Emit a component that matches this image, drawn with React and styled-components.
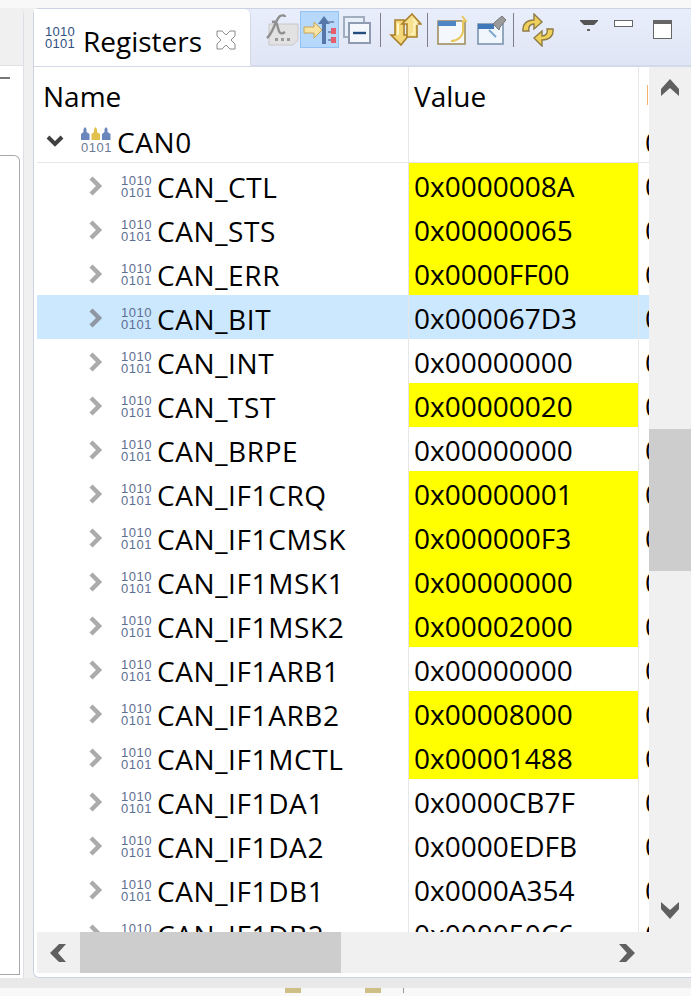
import React from "react";
import styled, { createGlobalStyle } from "styled-components";

const GlobalStyle = createGlobalStyle`
  html, body {
    margin: 0;
    padding: 0;
    background: #f0f0f0;
    overflow: hidden;
  }
  * { box-sizing: border-box; }
`;

const Page = styled.div`
  width: 691px;
  height: 996px;
  display: flex;
  flex-direction: column;
  overflow: hidden;
  font-family: "Open Sans", "Noto Sans", sans-serif;
  color: #000;
`;

const TopStrip = styled.div`
  height: 8px;
  flex: none;
  background: #f8f8f8;
`;

const Main = styled.div`
  height: 970px;
  flex: none;
  display: flex;
  background: #f0f0f0;
`;

const LeftPanel = styled.div`
  width: 24px;
  flex: none;
  display: flex;
  flex-direction: column;
  padding-bottom: 3px;
  background: #fff;
  border-right: 1px solid #dcdfe6;
  border-top-right-radius: 6px;
  overflow: hidden;
`;

const LeftHeader = styled.div`
  height: 58px;
  flex: none;
  background: #f0f0f0;
  border-bottom: 1px solid #e0e0e0;
`;

const LeftGap = styled.div`
  height: 89px;
  flex: none;
  padding-top: 11px;
`;

const LeftDash = styled.div`
  width: 10px;
  height: 2px;
  background: #777;
`;

const LeftBox = styled.div`
  flex: 1;
  width: 20px;
  background: #fff;
  border: 1px solid #a8a8a8;
  border-left: none;
  border-top-right-radius: 6px;
`;

const View = styled.div`
  width: 658px;
  margin-left: 9px;
  flex: none;
  display: flex;
  flex-direction: column;
  background: #fff;
  border: 1px solid #ccd2e4;
  border-right: none;
  border-top-left-radius: 6px;
  border-bottom-left-radius: 6px;
`;

const ViewHeader = styled.div`
  height: 58px;
  flex: none;
  display: flex;
  background: linear-gradient(#e9eefc, #dfe5f4);
  border-bottom: 2px solid #d4d9e8;
`;

const Tab = styled.div`
  width: 217px;
  height: 57px;
  flex: none;
  display: flex;
  align-items: center;
  padding: 0 14px 0 11px;
  background: #fff;
  border-right: 1px solid #d4d9e8;
  border-bottom: 1px solid #fff;
  border-top-right-radius: 6px;
`;

const TabLabel = styled.span`
  margin: 7px 0 0 8px;
  font-size: 28px;
  line-height: 36px;
  flex: 1;
`;

const TabClose = styled.span`
  display: flex;
  margin-top: 6px;
`;

const Toolbar = styled.div`
  flex: 1;
  display: flex;
  align-items: center;
  padding: 0 0 15px 14px;
`;

const ToolButton = styled.div`
  width: ${(p) => p.$w || 40}px;
  height: 37px;
  flex: none;
  display: flex;
  align-items: center;
  justify-content: center;
  background: ${(p) => (p.$on ? "#b6d9fb" : "transparent")};
  border: ${(p) => (p.$on ? "1px solid #92c3f2" : "none")};
`;

const Sep = styled.div`
  width: 1px;
  height: 34px;
  flex: none;
  margin: 0 4px 0 ${(p) => p.$l}px;
  background: #7d8088;
`;

const WindowButtons = styled.div`
  margin-left: 22px;
  display: flex;
  align-items: flex-start;
  gap: 16px;
  height: 37px;
  padding-top: 9px;
`;

const Body = styled.div`
  flex: 1;
  min-height: 0;
  display: grid;
  grid-template-columns: 612px 42px;
  grid-template-rows: 865px 41px;
  padding-left: 3px;
`;

const Table = styled.div`
  overflow: hidden;
  display: flex;
  flex-direction: column;
`;

const columns = "372px 230px 10px";

const HeaderRow = styled.div`
  height: 52px;
  flex: none;
  display: grid;
  grid-template-columns: ${columns};
`;

const HeaderCell = styled.div`
  font-size: 28px;
  line-height: 58px;
  padding-left: ${(p) => p.$pl || 5}px;
  border-right: 1px solid #e6e6e6;
  overflow: hidden;
  white-space: nowrap;
`;

const HeaderEdge = styled.div`
  margin: 18px 0 0 8px;
  width: 1px;
  height: 20px;
  background: #f5b56e;
`;

const Row = styled.div`
  height: 44px;
  flex: none;
  display: grid;
  grid-template-columns: ${columns};
  background: ${(p) => (p.$selected ? "#cce8ff" : "#fff")};
`;

const NameCell = styled.div`
  display: flex;
  align-items: center;
  padding-left: ${(p) => (p.$root ? 8 : 49)}px;
  font-size: 28px;
  letter-spacing: 0.6px;
  border-right: 1px solid #e6e6e6;
  border-bottom: 1px solid #e6e6e6;
  white-space: nowrap;
`;

const Twist = styled.svg`
  width: 20px;
  height: 20px;
  flex: none;
  margin-right: ${(p) => p.$mr}px;
`;

const RegName = styled.span`
  margin: ${(p) => (p.$root ? 2 : 2)}px 0 0 6px;
  line-height: 40px;
`;

const ValueCell = styled.div`
  padding: 2px 0 0 5px;
  font-size: 28px;
  line-height: 43px;
  background: ${(p) => (p.$changed ? "#ffff00" : "transparent")};
  border-right: 1px solid #e6e6e6;
  border-bottom: 1px solid ${(p) => (p.$changed ? "#ffff00" : "#e6e6e6")};
  white-space: nowrap;
`;

const ExtraCell = styled.div`
  padding: 2px 0 0 6px;
  font-size: 28px;
  line-height: 43px;
  overflow: hidden;
  border-bottom: 1px solid #e6e6e6;
  white-space: nowrap;
`;

const VBar = styled.div`
  position: relative;
  display: flex;
  flex-direction: column;
  align-items: center;
  justify-content: space-between;
  padding: 11px 0 12px;
  background: #f0f0f0;
`;

const VThumb = styled.div`
  position: absolute;
  left: 0;
  right: 0;
  top: 362px;
  height: 142px;
  background: #cdcdcd;
`;

const HBar = styled.div`
  position: relative;
  display: flex;
  align-items: center;
  justify-content: space-between;
  padding: 0 12px 0 11px;
  background: #f0f0f0;
`;

const HThumb = styled.div`
  position: absolute;
  left: 43px;
  top: 0;
  bottom: 0;
  width: 261px;
  background: #cdcdcd;
`;

const Corner = styled.div`
  background: #f0f0f0;
`;

const BottomStrip = styled.div`
  flex: 1;
  display: flex;
  flex-direction: column;
`;

const StatusGap = styled.div`
  height: 10px;
  flex: none;
  background: #e9e9e9;
`;

const StatusBar = styled.div`
  flex: 1;
  display: flex;
  background: #f8f8f8;
  padding-left: 285px;
`;

const StatusMark = styled.div`
  width: 16px;
  height: 5px;
  margin-right: 64px;
  background: #cdbf86;
`;

const StatusLine = styled.div`
  width: 1px;
  height: 5px;
  margin-left: -42px;
  background: #999;
`;

const MinimizeBox = styled.div`
  width: 19px;
  height: 7px;
  flex: none;
  margin-right: 4px;
  background: #fff;
  border: 1px solid #666;
`;

const MaximizeBox = styled.div`
  width: 19px;
  height: 19px;
  flex: none;
  background: #fff;
  border: 1px solid #666;
  border-top-width: 4px;
`;

const registers = [
  ["CAN_CTL", "0x0000008A", true],
  ["CAN_STS", "0x00000065", true],
  ["CAN_ERR", "0x0000FF00", true],
  ["CAN_BIT", "0x000067D3", false, true],
  ["CAN_INT", "0x00000000"],
  ["CAN_TST", "0x00000020", true],
  ["CAN_BRPE", "0x00000000"],
  ["CAN_IF1CRQ", "0x00000001", true],
  ["CAN_IF1CMSK", "0x000000F3", true],
  ["CAN_IF1MSK1", "0x00000000", true],
  ["CAN_IF1MSK2", "0x00002000", true],
  ["CAN_IF1ARB1", "0x00000000"],
  ["CAN_IF1ARB2", "0x00008000", true],
  ["CAN_IF1MCTL", "0x00001488", true],
  ["CAN_IF1DA1", "0x0000CB7F"],
  ["CAN_IF1DA2", "0x0000EDFB"],
  ["CAN_IF1DB1", "0x0000A354"],
  ["CAN_IF1DB2", "0x000050C6"],
];

function BinaryIcon({ color = "#5d6f92", spacing = 0.5 }) {
  return (
    <svg width="30" height="28" viewBox="0 0 30 28" style={{ flex: "none", overflow: "visible" }}>
      <g fontFamily="Liberation Sans, sans-serif" fontSize="13" fill={color} letterSpacing={spacing}>
        <text x="0" y="13">1010</text>
        <text x="0" y="25">0101</text>
      </g>
    </svg>
  );
}

function GroupIcon() {
  return (
    <svg width="30" height="30" viewBox="0 0 30 30" style={{ flex: "none", overflow: "visible" }}>
      <path d="M0 14V8l2.500-2V3l1.500-2 1.500 2v3l3 2v6z" fill="#6b86bd" />
      <path d="M10.500 14V8l2.500-2V3l1.500-2L16 3v3l3 2v6z" fill="#e3c14f" />
      <path d="M21 14V8l2.500-2V3L25 1l1.500 2v3l3 2v6z" fill="#6b86bd" />
      <text x="0" y="26" fontFamily="Liberation Sans, sans-serif" fontSize="13" fill="#6d7b96" letterSpacing="0.5">0101</text>
    </svg>
  );
}

function Chevron({ down, mr, light }) {
  return (
    <Twist $mr={mr} viewBox="0 0 20 20">
      {down ? (
        <path d="M3 6l7 7 7-7" fill="none" stroke="#404040" strokeWidth="4" />
      ) : (
        <path d="M5 2l8 8-8 8" fill="none" stroke={light ? "#8f97a3" : "#ababab"} strokeWidth="4.500" />
      )}
    </Twist>
  );
}

function ScrollArrow({ dir }) {
  const paths = {
    up: "M10 1l9 10v7l-9-8-9 8v-7z",
    down: "M1 2l9 8 9-8v7L10 19 1 9z",
    left: "M11 1h7l-8 9 8 9h-7L2 10z",
    right: "M2 1h7l9 9-9 9H2l8-9z",
  };
  return (
    <svg width="20" height="20" viewBox="0 0 20 20" style={{ position: "relative", flex: "none" }}>
      <path d={paths[dir]} fill="#606060" />
    </svg>
  );
}

function CloseIcon() {
  return (
    <svg width="20" height="20" viewBox="0 0 20 20" style={{ flex: "none" }}>
      <path
        d="M1 1h5l4 4 4-4h5v5l-4 4 4 4v5h-5l-4-4-4 4H1v-5l4-4-4-4z"
        fill="#fff"
        stroke="#8a8a8a"
        strokeWidth="1"
      />
    </svg>
  );
}

function ExpressionIcon() {
  return (
    <svg width="34" height="32" viewBox="0 0 34 32">
      <path d="M3 10h29v16l-5 5H3z" fill="#e2e2e2" stroke="#c8c8c8" />
      <path d="M9 24h3v3H9zM15 24h3v3h-3zM21 24h3v3h-3z" fill="#9a9a9a" />
      <path d="M1 24C8 18 9 6 14 2c2-1 5-1 5 1M6 8c4-1 5 1 6 6s3 7 7 4" fill="none" stroke="#8f8f8f" strokeWidth="2.400" />
    </svg>
  );
}

function HierarchyIcon() {
  return (
    <svg width="34" height="32" viewBox="0 0 34 32">
      <path d="M1 13h10V8l8 8-8 8v-5H1z" fill="#f6e3a3" stroke="#c9a552" />
      <path d="M21 2l6 8h-4v20h-4V10h-4z" fill="#5577aa" />
      <path d="M25 7h6v2h-6zM25 17h3v2h-3zM25 25h3v2h-3z" fill="#7f93b4" />
      <path d="M28 14h5v6h-5zM28 23h5v6h-5z" fill="#e85d6e" />
    </svg>
  );
}

function CollapseIcon() {
  return (
    <svg width="28" height="28" viewBox="0 0 28 28">
      <rect x="1" y="1" width="20" height="20" fill="#e8f0fa" stroke="#a2adc0" strokeWidth="2" />
      <rect x="6" y="7" width="21" height="20" fill="#f4f8fd" stroke="#8f9bb0" strokeWidth="2" />
      <path d="M10 17h13" stroke="#234e80" strokeWidth="2.400" />
    </svg>
  );
}

function SyncArrowsIcon() {
  return (
    <svg width="34" height="33" viewBox="0 0 34 33">
      <path d="M7 7h9v15h5l-8 10-10-10h4z" fill="#f4d77a" stroke="#a9802b" strokeWidth="1.600" />
      <path d="M24 1l9 10h-4v13h-10V11h-5z" fill="#f7e08e" stroke="#a9802b" strokeWidth="1.600" />
      <path d="M25 6l4 5h-3v10h-3" fill="none" stroke="#fff6c9" strokeWidth="1.400" />
      <path d="M10 10v12" stroke="#fff6c9" strokeWidth="2" />
    </svg>
  );
}

function NewWindowIcon() {
  return (
    <svg width="30" height="30" viewBox="0 0 30 30">
      <rect x="1" y="6" width="27" height="23" fill="#f4f8fd" stroke="#a08f5e" strokeWidth="1.600" />
      <rect x="1" y="6" width="18" height="5" fill="#4f86c6" />
      <path d="M25 1l4 5h-3v9c0 7-6 11-12 11" fill="none" stroke="#e8c75c" strokeWidth="2" />
    </svg>
  );
}

function PinIcon() {
  return (
    <svg width="30" height="30" viewBox="0 0 30 30">
      <rect x="1" y="9" width="25" height="20" fill="#f1f6fc" stroke="#7c94ae" strokeWidth="1.600" />
      <rect x="1" y="9" width="16" height="5" fill="#3f78b8" />
      <path d="M12 15l7 7" stroke="#7ea6d0" strokeWidth="2" />
      <path d="M18 7l7-6 4 4-6 7-1 3-6-6z" fill="#9a9a9a" stroke="#777" />
    </svg>
  );
}

function RefreshIcon() {
  return (
    <svg width="34" height="34" viewBox="0 0 34 34">
      <path d="M2 18C1 11 6 7 13 7V1l8 8-8 7v-5c-4 0-6 3-5 7z" fill="#eed05a" stroke="#8f7b45" strokeWidth="1.400" />
      <path d="M32 16c1 7-4 11-11 11v6l-8-8 8-7v5c4 0 6-3 5-7z" fill="#eed05a" stroke="#8f7b45" strokeWidth="1.400" />
    </svg>
  );
}

function MenuIcon() {
  return (
    <svg width="18" height="11" viewBox="0 0 18 11" style={{ flex: "none" }}>
      <path d="M0 0h18v1l-4 4H4L0 1z" fill="#555" />
      <path d="M7 9h3v2H7z" fill="#666" />
    </svg>
  );
}

export default function App() {
  return (
    <Page>
      <GlobalStyle />
      <TopStrip />
      <Main>
        <LeftPanel>
          <LeftHeader />
          <LeftGap>
            <LeftDash />
          </LeftGap>
          <LeftBox />
        </LeftPanel>
        <View>
          <ViewHeader>
            <Tab>
              <BinaryIcon color="#2f4f80" spacing={0.3} />
              <TabLabel>Registers</TabLabel>
              <TabClose>
                <CloseIcon />
              </TabClose>
            </Tab>
            <Toolbar>
              <ToolButton $w={35}><ExpressionIcon /></ToolButton>
              <ToolButton $w={39} $on><HierarchyIcon /></ToolButton>
              <ToolButton $w={35}><CollapseIcon /></ToolButton>
              <Sep $l={6} />
              <ToolButton><SyncArrowsIcon /></ToolButton>
              <Sep $l={2} />
              <ToolButton><NewWindowIcon /></ToolButton>
              <ToolButton><PinIcon /></ToolButton>
              <Sep $l={1} />
              <ToolButton><RefreshIcon /></ToolButton>
              <WindowButtons>
                <MenuIcon />
                <MinimizeBox />
                <MaximizeBox />
              </WindowButtons>
            </Toolbar>
          </ViewHeader>
          <Body>
            <Table>
              <HeaderRow>
                <HeaderCell $pl={6}>Name</HeaderCell>
                <HeaderCell>Value</HeaderCell>
                <HeaderEdge />
              </HeaderRow>
              <Row>
                <NameCell $root>
                  <Chevron down mr={16} />
                  <GroupIcon />
                  <RegName $root>CAN0</RegName>
                </NameCell>
                <ValueCell />
                <ExtraCell>0</ExtraCell>
              </Row>
              {registers.map(([name, value, changed, selected]) => (
                <Row key={name} $selected={selected}>
                  <NameCell>
                    <Chevron mr={15} light={selected} />
                    <BinaryIcon />
                    <RegName>{name}</RegName>
                  </NameCell>
                  <ValueCell $changed={changed}>{value}</ValueCell>
                  <ExtraCell>0</ExtraCell>
                </Row>
              ))}
            </Table>
            <VBar>
              <VThumb />
              <ScrollArrow dir="up" />
              <ScrollArrow dir="down" />
            </VBar>
            <HBar>
              <HThumb />
              <ScrollArrow dir="left" />
              <ScrollArrow dir="right" />
            </HBar>
            <Corner />
          </Body>
        </View>
      </Main>
      <BottomStrip>
        <StatusGap />
        <StatusBar>
          <StatusMark />
          <StatusMark />
          <StatusLine />
        </StatusBar>
      </BottomStrip>
    </Page>
  );
}
